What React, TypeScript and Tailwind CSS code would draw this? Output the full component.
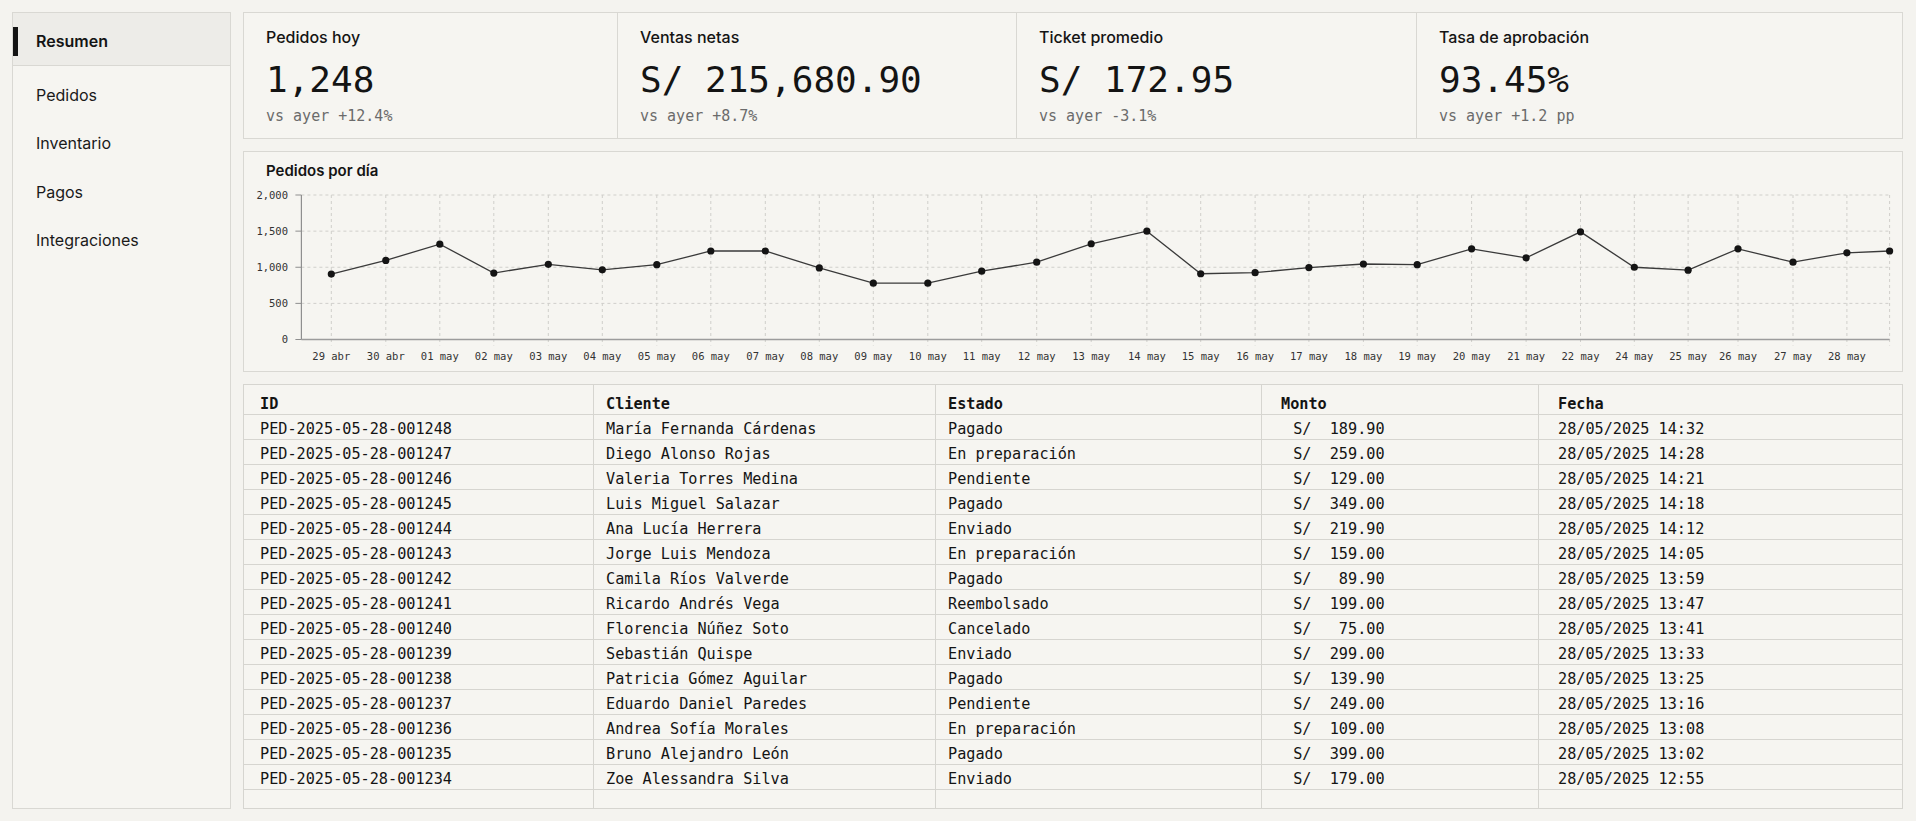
import React from "react";

const sans = "font-['Inter','Noto_Sans',sans-serif]";
const mono = "font-['DejaVu_Sans_Mono','Liberation_Mono',monospace]";

const nav = ["Resumen", "Pedidos", "Inventario", "Pagos", "Integraciones"];

const kpis = [
  { title: "Pedidos hoy", value: "1,248", delta: "vs ayer +12.4%" },
  { title: "Ventas netas", value: "S/ 215,680.90", delta: "vs ayer +8.7%" },
  { title: "Ticket promedio", value: "S/ 172.95", delta: "vs ayer -3.1%" },
  { title: "Tasa de aprobación", value: "93.45%", delta: "vs ayer +1.2 pp" },
];

// [etiqueta, pedidos, x en px dentro del svg]
const days: [string | null, number, number][] = [
  ["29 abr", 905, 87.3],
  ["30 abr", 1095, 141.8],
  ["01 may", 1320, 195.8],
  ["02 may", 920, 249.8],
  ["03 may", 1040, 304.3],
  ["04 may", 965, 358.3],
  ["05 may", 1035, 412.8],
  ["06 may", 1225, 466.8],
  ["07 may", 1225, 521.3],
  ["08 may", 990, 575.3],
  ["09 may", 780, 629.3],
  ["10 may", 780, 683.8],
  ["11 may", 945, 737.7],
  ["12 may", 1070, 792.7],
  ["13 may", 1325, 847.2],
  ["14 may", 1500, 902.9],
  ["15 may", 910, 956.7],
  ["16 may", 925, 1011.1],
  ["17 may", 995, 1064.9],
  ["18 may", 1045, 1119.4],
  ["19 may", 1035, 1173.2],
  ["20 may", 1255, 1227.6],
  ["21 may", 1130, 1282.1],
  ["22 may", 1490, 1336.5],
  ["24 may", 1000, 1390.3],
  ["25 may", 960, 1444.1],
  ["26 may", 1255, 1494],
  ["27 may", 1070, 1549],
  ["28 may", 1200, 1602.9],
  [null, 1225, 1645.6],
];

const orders = [
  ["PED-2025-05-28-001248", "María Fernanda Cárdenas", "Pagado", 189.9, "28/05/2025 14:32"],
  ["PED-2025-05-28-001247", "Diego Alonso Rojas", "En preparación", 259, "28/05/2025 14:28"],
  ["PED-2025-05-28-001246", "Valeria Torres Medina", "Pendiente", 129, "28/05/2025 14:21"],
  ["PED-2025-05-28-001245", "Luis Miguel Salazar", "Pagado", 349, "28/05/2025 14:18"],
  ["PED-2025-05-28-001244", "Ana Lucía Herrera", "Enviado", 219.9, "28/05/2025 14:12"],
  ["PED-2025-05-28-001243", "Jorge Luis Mendoza", "En preparación", 159, "28/05/2025 14:05"],
  ["PED-2025-05-28-001242", "Camila Ríos Valverde", "Pagado", 89.9, "28/05/2025 13:59"],
  ["PED-2025-05-28-001241", "Ricardo Andrés Vega", "Reembolsado", 199, "28/05/2025 13:47"],
  ["PED-2025-05-28-001240", "Florencia Núñez Soto", "Cancelado", 75, "28/05/2025 13:41"],
  ["PED-2025-05-28-001239", "Sebastián Quispe", "Enviado", 299, "28/05/2025 13:33"],
  ["PED-2025-05-28-001238", "Patricia Gómez Aguilar", "Pagado", 139.9, "28/05/2025 13:25"],
  ["PED-2025-05-28-001237", "Eduardo Daniel Paredes", "Pendiente", 249, "28/05/2025 13:16"],
  ["PED-2025-05-28-001236", "Andrea Sofía Morales", "En preparación", 109, "28/05/2025 13:08"],
  ["PED-2025-05-28-001235", "Bruno Alejandro León", "Pagado", 399, "28/05/2025 13:02"],
  ["PED-2025-05-28-001234", "Zoe Alessandra Silva", "Enviado", 179, "28/05/2025 12:55"],
] as const;

const money = (n: number) => " S/ " + n.toFixed(2).padStart(7);

const line = "border-[#d6d5d0]";
const cell = `border-b border-r ${line} leading-5`;

function Chart() {
  const W = 1658;
  const H = 186;
  const left = 57.4;
  const right = 1645.6;
  const top = 14;
  const base = 158.5;
  const y = (v: number) => base - (v / 2000) * (base - top);
  const ticks = [0, 500, 1000, 1500, 2000];
  const path = days.map(([, v, x]) => `${x},${y(v)}`).join(" ");

  return (
    <svg width={W} height={H} viewBox={`0 0 ${W} ${H}`} className={mono}>
      {ticks.slice(1).map((t) => (
        <line key={t} x1={left} x2={right} y1={y(t)} y2={y(t)} stroke="#d0cfcb" strokeDasharray="3 3" />
      ))}
      {days.map(([, , x], i) => (
        <line key={i} x1={x} x2={x} y1={top} y2={base + 6} stroke="#d0cfcb" strokeDasharray="3 3" />
      ))}
      <line x1={left} x2={left} y1={top} y2={base} stroke="#8f8f8f" strokeWidth={1.2} />
      <line x1={left} x2={right} y1={base} y2={base} stroke="#9c9c9c" strokeWidth={1.6} />
      {ticks.map((t) => (
        <g key={t}>
          <line x1={left - 6} x2={left} y1={y(t)} y2={y(t)} stroke="#8f8f8f" />
          <text x={44} y={y(t) + 3.8} textAnchor="end" fontSize={10.5} fill="#333">
            {t.toLocaleString("en-US")}
          </text>
        </g>
      ))}
      {days.map(([label, , x], i) =>
        label ? (
          <text key={i} x={x} y={178.7} textAnchor="middle" fontSize={10.5} fill="#333">
            {label}
          </text>
        ) : null
      )}
      <polyline points={path} fill="none" stroke="#3a3a3a" strokeWidth={1.3} />
      {days.map(([, v, x], i) => (
        <circle key={i} cx={x} cy={y(v)} r={3.6} fill="#141414" />
      ))}
    </svg>
  );
}

export default function App() {
  return (
    <div className={`flex h-screen gap-3 bg-[#f4f3ef] p-3 pr-[13px] text-[#141414] ${sans}`}>
      <aside className="w-[219px] shrink-0 border border-[#d9d8d3] bg-[#f6f5f1]">
        <div className="relative flex h-[53px] items-center border-b border-[#d9d8d3] bg-[#edece8] pt-[4px] pl-[23px] text-base font-semibold">
          <span className="absolute left-0 top-[14px] h-[29px] w-[5px] bg-[#141414]" />
          Resumen
        </div>
        <ul className="pt-[5px]">
          {nav.slice(1).map((n) => (
            <li key={n} className="py-3 pl-[23px] text-base leading-[24.3px] text-[#1a1a1a]">
              {n}
            </li>
          ))}
        </ul>
      </aside>

      <main className="flex min-w-0 flex-1 flex-col gap-3">
        <section className="grid grid-cols-[373px_399px_400px_1fr] border border-[#d9d8d3] bg-[#f6f5f1]">
          {kpis.map((k, i) => (
            <div key={k.title} className={`px-[22px] pt-3 pb-3 ${i > 0 ? "border-l border-[#d9d8d3]" : ""}`}>
              <div className="text-base font-medium leading-6">{k.title}</div>
              <div className={`mt-[13px] text-[36px] leading-none ${mono}`}>{k.value}</div>
              <div className={`mt-2 text-[15px] leading-5 text-[#6b6b6b] ${mono}`}>{k.delta}</div>
            </div>
          ))}
        </section>

        <section className="border border-[#d9d8d3] bg-[#f6f5f1] pt-[9px] pb-1">
          <h2 className="pl-[22px] text-[15px] font-semibold leading-5">Pedidos por día</h2>
          <Chart />
        </section>

        <section className="min-h-0 flex-1">
          <table
            className={`h-full w-full table-fixed border-separate border-spacing-0 border-t border-l ${line} bg-[#f6f5f1] text-[15.2px] text-[#141414] ${mono}`}
          >
            <colgroup>
              <col className="w-[350px]" />
              <col className="w-[342px]" />
              <col className="w-[326px]" />
              <col className="w-[277px]" />
              <col />
            </colgroup>
            <thead>
              <tr className="h-[30px] text-left align-top">
                <th className={`${cell} pl-4 pt-[9px] font-semibold`}>ID</th>
                <th className={`${cell} pl-3 pt-[9px] font-semibold`}>Cliente</th>
                <th className={`${cell} pl-3 pt-[9px] font-semibold`}>Estado</th>
                <th className={`${cell} pl-[19px] pt-[9px] font-semibold`}>Monto</th>
                <th className={`${cell} pl-[19px] pt-[9px] font-semibold`}>Fecha</th>
              </tr>
            </thead>
            <tbody>
              {orders.map(([id, client, status, amount, date]) => (
                <tr key={id} className="h-[25px] align-top">
                  <td className={`${cell} pl-4 pt-1`}>{id}</td>
                  <td className={`${cell} pl-3 pt-1`}>{client}</td>
                  <td className={`${cell} pl-3 pt-1`}>{status}</td>
                  <td className={`${cell} whitespace-pre pl-[22px] pt-1`}>{money(amount)}</td>
                  <td className={`${cell} pl-[19px] pt-1`}>{date}</td>
                </tr>
              ))}
              <tr>
                <td className={cell} />
                <td className={cell} />
                <td className={cell} />
                <td className={cell} />
                <td className={cell} />
              </tr>
            </tbody>
          </table>
        </section>
      </main>
    </div>
  );
}
